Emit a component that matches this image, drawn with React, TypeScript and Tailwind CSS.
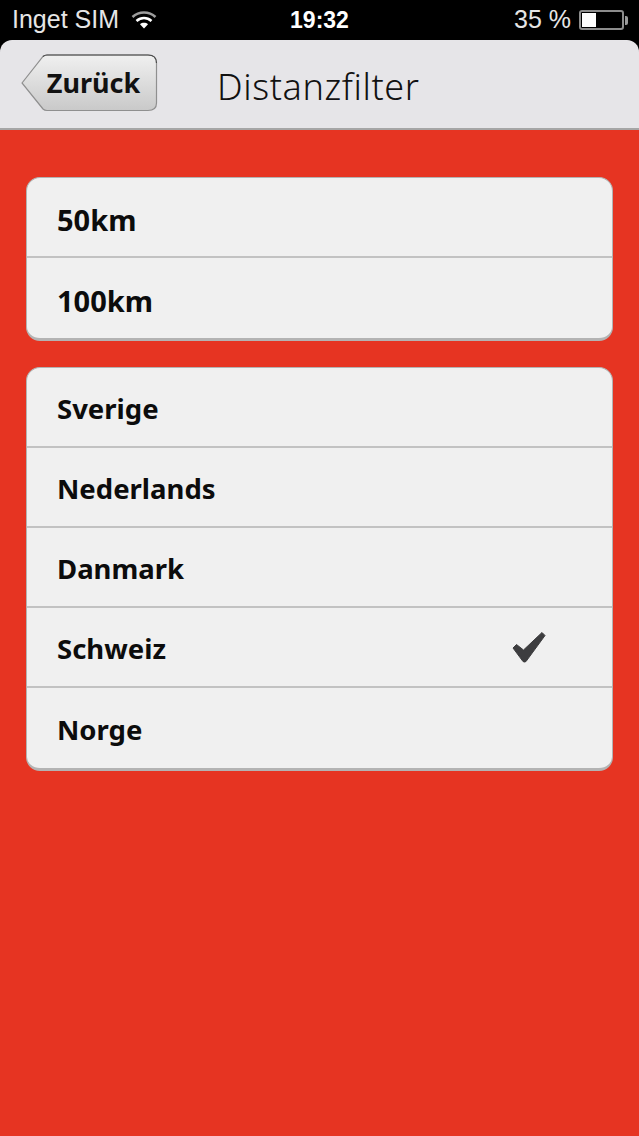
const DISTANCES = ["50km", "100km"]
const COUNTRIES = ["Sverige", "Nederlands", "Danmark", "Schweiz", "Norge"]

function Wifi() {
  return (
    <svg width="26" height="19" viewBox="0 0 26 19" className="ml-[12px] mt-[-2px]">
      <path d="M1.5 7C8 1 18 1 24.5 7" fill="none" stroke="#9c9c9c" strokeWidth="2.6" />
      <path d="M5.5 11C10 7 16 7 20.5 11" fill="none" stroke="#ffffff" strokeWidth="2.6" />
      <path d="M9 14.2C11.2 12.4 14.8 12.4 17 14.2L13 18.4Z" fill="#ffffff" />
    </svg>
  )
}

function Battery() {
  return (
    <div className="ml-[8px] flex items-center">
      <div className="h-[20px] w-[45px] rounded-[3px] border-2 border-[#8d8d8d] p-[1px]">
        <div className="h-full w-[14px] bg-white" />
      </div>
      <div className="ml-[1px] h-[9px] w-[3px] rounded-r-[2px] bg-[#9a9a9a]" />
    </div>
  )
}

function BackButton() {
  return (
    <div className="relative ml-[21px] mt-[-4px] flex h-[58px] w-[137px] items-center justify-center pl-[8px]">
      <svg width="137" height="58" viewBox="0 0 137 58" className="absolute inset-0">
        <defs>
          <linearGradient id="back" x1="0" y1="0" x2="0" y2="1">
            <stop offset="0" stopColor="#f0f0f0" />
            <stop offset="1" stopColor="#c9c9c9" />
          </linearGradient>
        </defs>
        <path
          d="M1 29L22 2.5Q23.5 1 26 1H127Q135.5 1 135.5 9V49Q135.5 56.5 127 56.5H26Q23.5 56.5 22 55Z"
          fill="url(#back)"
          stroke="#8f8f8f"
          strokeWidth="1.2"
        />
        <path d="M22 2.5Q23.5 1 26 1H127Q135.5 1 135.5 9" fill="none" stroke="#4a4a4a" strokeWidth="1.2" />
      </svg>
      <span className="relative text-[27px] leading-none font-bold text-[#111] font-['Noto_Sans',sans-serif]">
        Zurück
      </span>
    </div>
  )
}

function Row({ label, checked, last, big }: { label: string; checked?: boolean; last?: boolean; big?: boolean }) {
  return (
    <div
      className={`flex h-[80px] items-center justify-between pl-[30px] pr-[66px] ${
        last ? "" : "border-b-2 border-[#c2c2c2]"
      }`}
    >
      <span
        className={`mt-[4px] leading-none font-bold text-[#0c0c0c] font-['Noto_Sans',sans-serif] ${
          big ? "text-[29px]" : "text-[27.5px]"
        }`}
      >
        {label}
      </span>
      {checked && (
        <svg width="34" height="32" viewBox="0 0 34 32">
          <path
            d="M1 17L4.5 13.5L11.5 19L30 1.5L33 4.5L14 30.5Q12.5 31.5 11 30.5Z"
            fill="#3d3d3f"
            stroke="#3d3d3f"
            strokeLinejoin="round"
          />
        </svg>
      )}
    </div>
  )
}

function Card({ children }: { children: React.ReactNode }) {
  return (
    <div className="overflow-hidden rounded-[14px] border-b-[3px] border-x border-t border-[#b3b3b3] bg-[#f0f0f0]">
      {children}
    </div>
  )
}

export default function App() {
  return (
    <div className="flex h-[1136px] w-[639px] flex-col overflow-hidden bg-black">
      {/* status bar */}
      <div className="relative flex h-[40px] shrink-0 items-center pl-[12px] pr-[11px] text-[25px] text-[#e6e6e6] font-['Liberation_Sans',sans-serif]">
        <span>Inget SIM</span>
        <Wifi />
        <span className="ml-auto">35 %</span>
        <Battery />
        <span className="absolute left-0 right-0 text-center text-[23px] font-bold text-white">19:32</span>
      </div>

      {/* nav bar */}
      <div className="flex h-[90px] shrink-0 items-center rounded-t-[12px] border-b-2 border-[#a5a5a5] bg-[#e6e5e8] pt-[1px]">
        <BackButton />
        <span className="ml-[59px] mt-[4px] text-[36px] leading-none tracking-[0.6px] text-[#111] font-['Noto_Sans',sans-serif] font-light">
          Distanzfilter
        </span>
      </div>

      {/* lists */}
      <div className="flex flex-1 flex-col gap-[26px] bg-[#e63422] pl-[26px] pr-[26px] pt-[47px]">
        <Card>
          {DISTANCES.map((d, i) => (
            <Row key={d} label={d} big last={i === DISTANCES.length - 1} />
          ))}
        </Card>
        <Card>
          {COUNTRIES.map((c, i) => (
            <Row key={c} label={c} checked={c === "Schweiz"} last={i === COUNTRIES.length - 1} />
          ))}
        </Card>
      </div>
    </div>
  )
}
